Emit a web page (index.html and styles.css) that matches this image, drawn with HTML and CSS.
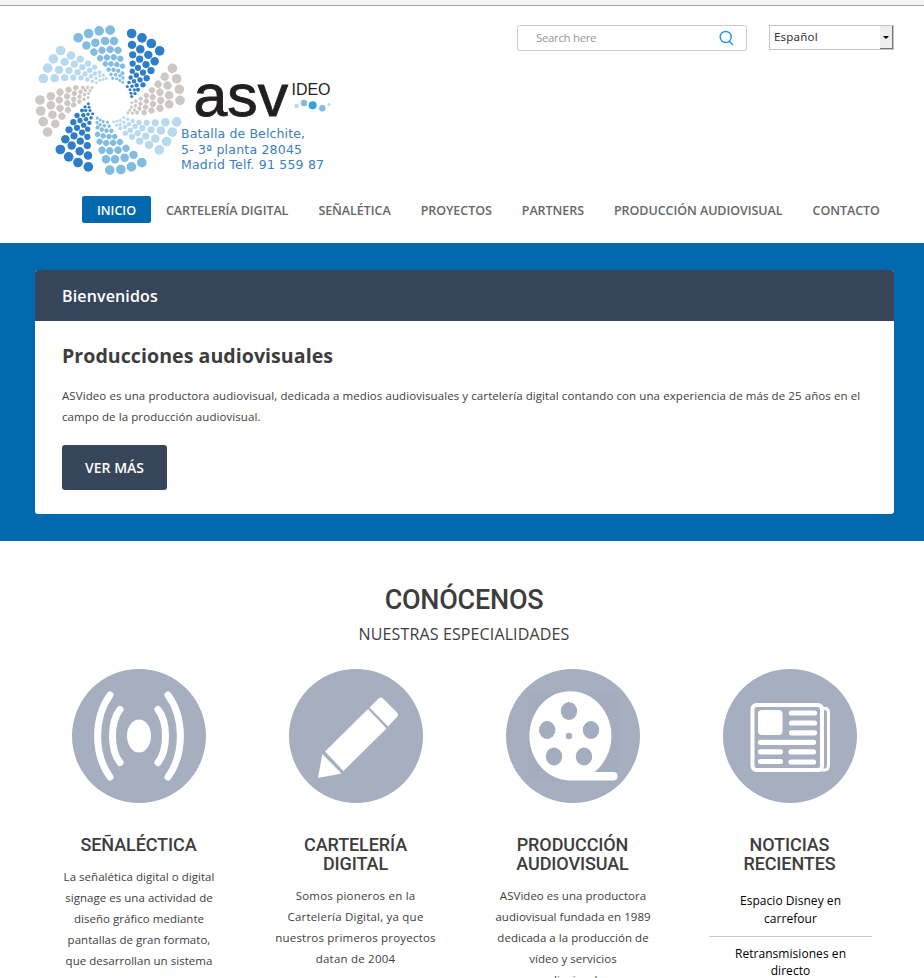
FILE: index.html
```html
<!DOCTYPE html>
<html lang="es">
<head>
<meta charset="utf-8">
<title>ASVideo</title>
<link rel="stylesheet" href="styles.css">
</head>
<body>
<div class="topbar"></div>
<header class="header">
  <a class="logo" aria-label="ASVideo">
    <svg width="300" height="160" viewBox="0 0 300 160">
      <defs>
        <g id="arm">
          <circle cx="65" cy="-200" r="14.500"/><circle cx="96" cy="-187" r="14.500"/><circle cx="124" cy="-170" r="14.500"/><circle cx="149" cy="-148" r="14.500"/>
          <circle cx="66" cy="-166" r="12.700"/><circle cx="91" cy="-153" r="12.700"/><circle cx="115" cy="-136" r="12.700"/><circle cx="134" cy="-117" r="12.700"/>
          <circle cx="68" cy="-136" r="10.800"/><circle cx="89" cy="-123" r="10.800"/><circle cx="108" cy="-107" r="10.800"/><circle cx="123" cy="-89" r="10.800"/>
          <circle cx="68" cy="-110" r="9.300"/><circle cx="84" cy="-97" r="9.300"/><circle cx="99" cy="-83" r="9.300"/><circle cx="110" cy="-66" r="9.300"/>
          <circle cx="67" cy="-87" r="8"/><circle cx="79" cy="-75" r="8"/><circle cx="90" cy="-61" r="8"/><circle cx="99" cy="-46" r="8"/>
          <circle cx="62" cy="-68" r="6.600"/><circle cx="72" cy="-57" r="6.600"/><circle cx="80" cy="-45" r="6.600"/><circle cx="84" cy="-31" r="6"/>
          <circle cx="57" cy="-53" r="5.300"/><circle cx="66" cy="-42" r="5.300"/><circle cx="73" cy="-31" r="5"/><circle cx="75" cy="-20" r="5"/>
          <circle cx="52" cy="-41" r="4.500"/><circle cx="60" cy="-31" r="4.500"/><circle cx="63" cy="-21" r="4.500"/><circle cx="65" cy="-11" r="4.500"/>
        </g>
      </defs>
      <g transform="translate(75 80.200) scale(.3333)">
        <use href="#arm" fill="#2d7dc8"/>
        <use href="#arm" fill="#cfc7c4" transform="rotate(45)"/>
        <use href="#arm" fill="#b8daf0" transform="rotate(90)"/>
        <use href="#arm" fill="#81bce2" transform="rotate(135)"/>
        <use href="#arm" fill="#2d7dc8" transform="rotate(180)"/>
        <use href="#arm" fill="#cfc7c4" transform="rotate(225)"/>
        <use href="#arm" fill="#b8daf0" transform="rotate(270)"/>
        <use href="#arm" fill="#81bce2" transform="rotate(315)"/>
      </g>
      <text class="brand" x="158.500" y="96" textLength="94.500" lengthAdjust="spacingAndGlyphs">asv</text>
      <text class="brand-small" x="256.500" y="75" textLength="39" lengthAdjust="spacingAndGlyphs">IDEO</text>
      <circle cx="261.500" cy="86" r="2.300" fill="#b8daf0"/><circle cx="269" cy="83" r="3.200" fill="#81bce2"/><circle cx="277.700" cy="85.300" r="4" fill="#35a1da"/><circle cx="287.300" cy="88.300" r="3.200" fill="#81bce2"/><circle cx="294" cy="84.500" r="1.500" fill="#b8daf0"/>
      <g class="address">
        <text x="146" y="118" textLength="124">Batalla de Belchite,</text>
        <text x="146" y="133.500" textLength="121">5- 3ª planta 28045</text>
        <text x="146" y="149" textLength="143">Madrid Telf. 91 559 87</text>
      </g>
    </svg>
  </a>
  <div class="tools">
    <div class="search"><span>Search here</span>
      <svg width="15" height="16" viewBox="0 0 15 16" fill="none" stroke="#2196e3" stroke-width="1.400"><circle cx="6.700" cy="7" r="5.500"/><path d="M10 11l4 4"/></svg>
    </div>
    <div class="select"><span>Español</span><i class="arrow"></i></div>
  </div>
</header>
<nav class="nav">
  <a class="active">INICIO</a><a>CARTELERÍA DIGITAL</a><a>SEÑALÉTICA</a><a>PROYECTOS</a><a>PARTNERS</a><a>PRODUCCIÓN AUDIOVISUAL</a><a>CONTACTO</a>
</nav>
<section class="hero">
  <div class="card">
    <div class="card-head">Bienvenidos</div>
    <div class="card-body">
      <h2>Producciones audiovisuales</h2>
      <p>ASVideo es una productora audiovisual, dedicada a medios audiovisuales y cartelería digital contando con una experiencia de más de 25 años en el<br>campo de la producción audiovisual.</p>
      <a class="button">VER MÁS</a>
    </div>
  </div>
</section>
<section class="about">
  <h1>CONÓCENOS</h1>
  <p class="subtitle">NUESTRAS ESPECIALIDADES</p>
  <div class="columns">
    <article>
      <svg class="icon" viewBox="0 0 134 134"><circle cx="67" cy="67" r="67" fill="#a6afbf"/><ellipse cx="67" cy="67" rx="12" ry="16.500" fill="#fff"/><g fill="none" stroke="#fff" stroke-width="7" stroke-linecap="round"><path d="M48 40.500C38 53 38 81 48 93.500M38 26C21.500 49 21.500 85 38 108M86 40.500C96 53 96 81 86 93.500M96 26C112.500 49 112.500 85 96 108"/></g></svg>
      <h3>SEÑALÉCTICA</h3>
      <p>La señalética digital o digital<br>signage es una actividad de<br>diseño gráfico mediante<br>pantallas de gran formato,<br>que desarrollan un sistema<br>de comunicación visual</p>
    </article>
    <article>
      <svg class="icon" viewBox="0 0 134 134"><circle cx="67" cy="67" r="67" fill="#a6afbf"/><g fill="#fff"><path d="M29 109l4.300-24L52.500 104.500zM36 82.500L79 40l18.500 19.500L54.500 102zM80.500 38.500l9-9q2.500-2 4.500 0l14 14q2 2 0 4.500L99 57.500z"/></g></svg>
      <h3>CARTELERÍA<br>DIGITAL</h3>
      <p class="wide">Somos pioneros en la<br>Cartelería Digital, ya que<br>nuestros primeros proyectos<br>datan de 2004</p>
    </article>
    <article>
      <svg class="icon" viewBox="0 0 134 134"><defs><pattern id="hatch" width="4" height="4" patternUnits="userSpaceOnUse"><path d="M-1 1L1-1M0 4L4 0M3 5L5 3" stroke="#98a4b6" stroke-width=".7"/></pattern></defs><circle cx="67" cy="67" r="67" fill="#a6afbf"/><path d="M22 22h90v90H22z" fill="url(#hatch)"/><path d="M63 111.500A41 44.700 0 1 1 88.500 103H108a4.300 4.300 0 0 1 0 8.500z" fill="#fff"/><g fill="#a6afbf"><ellipse cx="63" cy="42" rx="8.200" ry="9"/><ellipse cx="41.200" cy="61" rx="8.200" ry="9"/><ellipse cx="85" cy="61" rx="8.200" ry="9"/><ellipse cx="48" cy="87.500" rx="8.200" ry="9"/><ellipse cx="78" cy="87.500" rx="8.200" ry="9"/><circle cx="63" cy="67" r="3.200"/></g><g fill="url(#hatch)"><ellipse cx="63" cy="42" rx="8.200" ry="9"/><ellipse cx="41.200" cy="61" rx="8.200" ry="9"/><ellipse cx="85" cy="61" rx="8.200" ry="9"/><ellipse cx="48" cy="87.500" rx="8.200" ry="9"/><ellipse cx="78" cy="87.500" rx="8.200" ry="9"/></g></svg>
      <h3>PRODUCCIÓN<br>AUDIOVISUAL</h3>
      <p>ASVideo es una productora<br>audiovisual fundada en 1989<br>dedicada a la producción de<br>vídeo y servicios<br>audiovisuales</p>
    </article>
    <article>
      <svg class="icon" viewBox="0 0 134 134"><circle cx="67" cy="67" r="67" fill="#a6afbf"/><path d="M98 39.500h4q3.500 0 3.500 4V96q0 5-4 5H92" fill="none" stroke="#fff" stroke-width="3"/><rect x="29.500" y="36" width="69.500" height="65" rx="4" fill="none" stroke="#fff" stroke-width="4"/><path d="M102 43.500v54" stroke="#a6afbf" stroke-width="1.500"/><rect x="35" y="41" width="24.500" height="25" rx="4" fill="#fff"/><path d="M68.500 44h23M68.500 54h23M68.500 63.800h23M37.500 73.300h53M37.500 82.800h20M37.500 92.500h20M68 82.800h22.500M68 93h22.500" stroke="#fff" stroke-width="5.200" stroke-linecap="round"/></svg>
      <h3>NOTICIAS<br>RECIENTES</h3>
      <ul class="news"><li>Espacio Disney en<br>carrefour</li><li>Retransmisiones en<br>directo</li></ul>
    </article>
  </div>
</section>
</body>
</html>
```
FILE: styles.css
```css
* { box-sizing: border-box; }
html, body { height: 978px; overflow: hidden; }
body { margin: 0; background: #fff; color: #3d3d3d; font-family: "Open Sans", "Noto Sans", sans-serif; }
h1, h2, h3, p, ul { margin: 0; padding: 0; font-weight: 400; }
.topbar { height: 6px; background: #f3f3f3; border-bottom: 1px solid #a3a3a3; }
.header { height: 190px; padding: 14px 30px 0 35px; display: flex; justify-content: space-between; }
.logo svg { display: block; }
.brand { font: 60px "Liberation Sans", sans-serif; fill: #231f20; stroke: #231f20; stroke-width: .9px; }
.brand-small { font: 16.5px "Liberation Sans", sans-serif; fill: #231f20; }
.address { font: 12.5px "DejaVu Sans", sans-serif; fill: #3a80c4; }
.tools { display: flex; gap: 22px; padding-top: 5px; }
.search { width: 230px; height: 26px; border: 1px solid #ccc; border-radius: 3px; padding: 0 12px 2px 18px; display: flex; align-items: center; justify-content: space-between; font-size: 11.5px; letter-spacing: -.35px; color: #999; }
.search svg { margin-top: 2px; }
.select { width: 125px; height: 25px; border: 1px solid #c4c4c4; display: flex; justify-content: space-between; font: 11.5px/22px "Noto Sans", sans-serif; padding-left: 4px; color: #333; letter-spacing: .2px; }
.arrow { width: 13px; height: 23px; background: #eee; border-right: 1px solid #777; border-bottom: 1px solid #777; display: flex; align-items: center; justify-content: center; }
.arrow::after { content: ""; border: 3px solid transparent; border-top-color: #000; border-bottom: 0; }
.nav { height: 47px; padding-left: 82px; display: flex; align-items: flex-start; }
.nav a { height: 27px; line-height: 29px; padding: 0 15px; font-size: 12.5px; font-weight: 600; color: #666; white-space: nowrap; letter-spacing: -.05px; }
.nav .active { background: #0069ae; color: #fff; border-radius: 2px; letter-spacing: 0; }
.hero { height: 298px; background: #0069ae; padding: 27px 30px 27px 35px; }
.card { height: 244px; background: #fff; border-radius: 3px; overflow: hidden; }
.card-head { height: 51px; background: #37455b; color: #fff; font-size: 16px; font-weight: 600; line-height: 52px; padding-left: 27px; letter-spacing: .15px; }
.card-body { padding: 20px 27px 0; }
.card h2 { font-size: 19.6px; font-weight: 700; line-height: 29px; letter-spacing: .03px; }
.card p { font-size: 11.5px; line-height: 21px; margin-top: 15px; white-space: nowrap; letter-spacing: .083px; }
.button { display: block; width: 105px; height: 45px; margin-top: 18px; background: #37455b; color: #fff; border-radius: 3px; font-size: 14px; font-weight: 600; line-height: 46px; text-align: center; }
.about { padding: 39px 26px 0 30px; text-align: center; }
.about h1 { font: 500 27px/40px Roboto, sans-serif; letter-spacing: -.25px; }
.subtitle { font-size: 16px; line-height: 24px; margin-top: 2px; letter-spacing: .13px; }
.columns { display: grid; grid-template-columns: repeat(4, 217px); margin-top: 23px; }
.icon { display: block; width: 134px; height: 134px; margin: 0 auto 32px; }
.columns h3 { font: 500 18px/19px Roboto, sans-serif; white-space: nowrap; letter-spacing: -.1px; }
.columns p { font-size: 11.5px; line-height: 21px; margin-top: 12px; white-space: nowrap; padding-left: 1px; letter-spacing: .03px; }
.columns .wide { letter-spacing: .21px; padding-left: 0; }
.news { list-style: none; width: 163px; margin: 19px 26px 0 28px; font-size: 12px; line-height: 18px; color: #000; letter-spacing: .05px; }
.news li { padding-bottom: 8px; margin-bottom: 8px; border-bottom: 1px solid #ccc; }
.news li + li { line-height: 17px; }
```
